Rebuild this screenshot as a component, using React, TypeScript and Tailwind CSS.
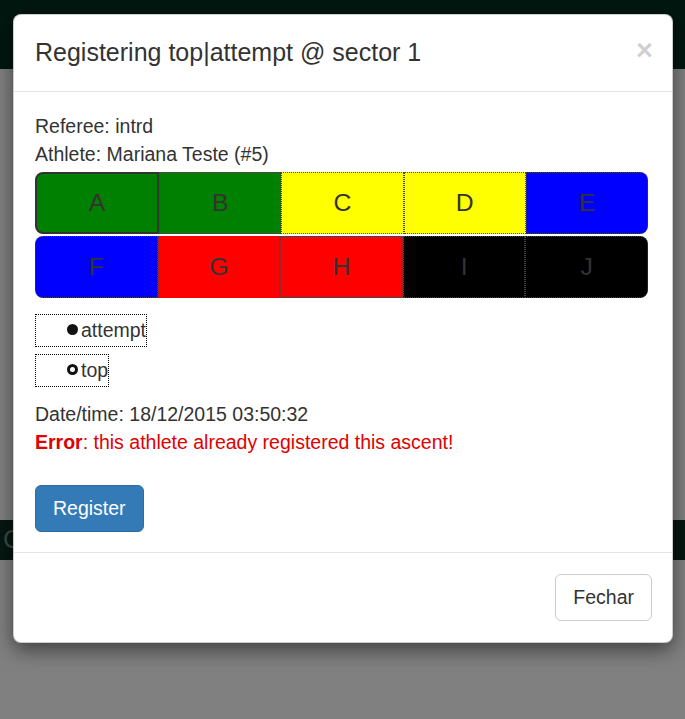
import React from 'react';

const tiles = [
  [
    { l: 'A', bg: 'bg-[#008000]' },
    { l: 'B', bg: 'bg-[#008000]' },
    { l: 'C', bg: 'bg-[#ffff00]' },
    { l: 'D', bg: 'bg-[#ffff00]' },
    { l: 'E', bg: 'bg-[#0000ff]' },
  ],
  [
    { l: 'F', bg: 'bg-[#0000ff]' },
    { l: 'G', bg: 'bg-[#ff0000]' },
    { l: 'H', bg: 'bg-[#ff0000]' },
    { l: 'I', bg: 'bg-[#000000]' },
    { l: 'J', bg: 'bg-[#000000]' },
  ],
];

const TileRow = ({ row, first }: { row: { l: string; bg: string }[]; first: boolean }) => (
  <div className="flex w-full">
    {row.map((t, i) => {
      const active = first && i === 0;
      return (
        <div
          key={t.l}
          className={[
            'flex-1 h-[62px] flex items-center justify-center text-[24.75px] text-[#333]',
            t.bg,
            active ? 'border-2 border-solid border-[#333]' : 'border border-dotted border-[#444]',
            i === 0 ? 'rounded-l-[8px]' : '',
            i === row.length - 1 ? 'rounded-r-[8px]' : '',
          ].join(' ')}
        >
          {t.l}
        </div>
      );
    })}
  </div>
);

const RadioOption = ({ label, filled }: { label: string; filled: boolean }) => (
  <div className="flex">
    <label className="inline-flex items-center h-[33px] border border-dotted border-black pl-[31px]">
      {filled ? (
        <span className="w-[11px] h-[11px] rounded-full bg-[#111] mr-[3px] -mt-[2px]" />
      ) : (
        <span className="w-[11px] h-[11px] rounded-full border-[3px] border-[#111] bg-white mr-[3px] -mt-[2px]" />
      )}
      <span>{label}</span>
    </label>
  </div>
);

export default function App() {
  return (
    <div
      className="relative w-[685px] h-[719px] overflow-hidden bg-[#808080] text-[#333] text-[19.5px] leading-[27.5px]"
      style={{ fontFamily: '"Liberation Sans", Arial, sans-serif' }}
    >
      {/* page behind the backdrop */}
      <div className="h-[69px] bg-[#021710]" />
      <div className="h-[451px]" />
      <div className="h-[40px] bg-[#061711] flex items-center pl-[3px] text-[26px] text-[#3a4a44]">C</div>

      {/* modal */}
      <div className="absolute left-[13px] top-[14px] w-[660px] bg-white rounded-[8px] shadow-[0_7px_20px_rgba(0,0,0,0.5)] border border-black/20">
        <div className="flex items-center justify-between px-[21px] pt-[20px] pb-[21px] border-b border-[#e5e5e5]">
          <h4 className="text-[25px] leading-[35px] text-[#333]">Registering top|attempt @ sector 1</h4>
          <span className="text-[29px] font-bold leading-none text-black/20 -mr-[2px] -mt-[4px]">×</span>
        </div>

        <div className="px-[21px] pt-[21px] pb-[20px]">
          <div>Referee: intrd</div>
          <div>Athlete: Mariana Teste (#5)</div>

          <div className="mt-[4px] mr-[3px] flex flex-col gap-[2px]">
            <TileRow row={tiles[0]} first />
            <TileRow row={tiles[1]} first={false} />
          </div>

          <div className="mt-[16px] flex flex-col gap-[7px]">
            <RadioOption label="attempt" filled />
            <RadioOption label="top" filled={false} />
          </div>

          <div className="mt-[14px]">Date/time: 18/12/2015 03:50:32</div>
          <div className="text-[#e00000]">
            <strong>Error</strong>: this athlete already registered this ascent!
          </div>

          <button className="mt-[29px] h-[47px] px-[17px] rounded-[6px] bg-[#337ab7] border border-[#2e6da4] text-white">
            Register
          </button>
        </div>

        <div className="flex justify-end px-[20px] pt-[21px] pb-[21px] border-t border-[#e5e5e5]">
          <button className="h-[47px] px-[17px] rounded-[6px] bg-white border border-[#ccc] text-[#333]">
            Fechar
          </button>
        </div>
      </div>
    </div>
  );
}
